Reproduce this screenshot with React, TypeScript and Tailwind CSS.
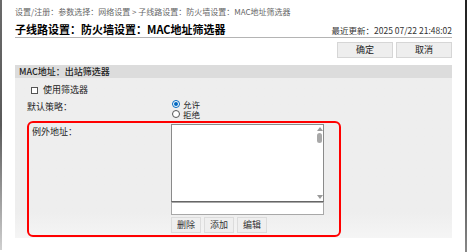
import React from 'react'

const font = { fontFamily: '"Noto Sans CJK SC", "Noto Sans", sans-serif' }

const SmallButton = ({ label }: { label: string }) => (
  <button className="h-[16px] w-[30px] border border-[#dcdcdc] bg-[#efefef] text-[9px] leading-[14px] text-[#333]">
    {label}
  </button>
)

const App = () => {
  return (
    <div style={font} className="relative h-[252px] w-[467px] overflow-hidden bg-white text-[#222]">
      {/* window edges */}
      <div className="absolute left-0 top-0 h-[250px] w-[2px] bg-gradient-to-b from-[#6a6a6a] via-[#5a5a5a] to-[#d0d0d0]" />
      <div className="absolute right-0 top-0 h-[252px] w-[2px] bg-gradient-to-b from-[#222] via-[#333] to-[#888]" />

      <div className="pl-[15px] pr-[15px]">
        {/* breadcrumb */}
        <div className="pt-[6px] text-[8px] leading-[12px] text-[#666]">
          设置/注册：参数选择：网络设置 &gt; 子线路设置：防火墙设置：MAC地址筛选器
        </div>

        {/* title */}
        <div className="mt-[4px] flex items-end justify-between border-b border-[#b4b4b4] pb-[1px]">
          <h1 className="text-[11px] font-bold leading-[14px] text-black">
            子线路设置：防火墙设置：MAC地址筛选器
          </h1>
          <span className="text-[8.5px] leading-[12px] text-[#333]">最近更新：2025 07/22 21:48:02</span>
        </div>

        {/* actions */}
        <div className="mt-[4px] flex justify-end gap-[3px]">
          <button className="h-[16px] w-[56px] border border-[#d6d6d6] bg-[#eeeeee] text-[9px] leading-[14px]">确定</button>
          <button className="h-[16px] w-[56px] border border-[#d6d6d6] bg-[#eeeeee] text-[9px] leading-[14px]">取消</button>
        </div>

        {/* section */}
        <div className="mt-[7px] bg-gradient-to-b from-[#eeeeee] from-85% to-[#f5f5f5] pb-[1px]">
          <div className="h-[13px] bg-[#dcdcdc] pl-[4px] text-[9px] font-medium leading-[13px] text-[#222]">
            MAC地址：出站筛选器
          </div>

          <div className="flex items-center pl-[16px] pt-[6px]">
            <span className="h-[7px] w-[7px] border border-[#555] bg-white" />
            <span className="ml-[5px] text-[9px] leading-[12px]">使用筛选器</span>
          </div>

          <div className="mt-[3px] flex pl-[12px]">
            <span className="w-[145px] pt-[2px] text-[9px] leading-[12px]">默认策略：</span>
            <div className="flex flex-col">
              <div className="flex h-[10px] items-center">
                <span className="flex h-[8px] w-[8px] items-center justify-center rounded-full border border-[#0067c0] bg-white">
                  <span className="h-[4px] w-[4px] rounded-full bg-[#0067c0]" />
                </span>
                <span className="ml-[3px] text-[8.5px] leading-[10px]">允许</span>
              </div>
              <div className="flex h-[10px] items-center">
                <span className="h-[8px] w-[8px] rounded-full border border-[#555] bg-white" />
                <span className="ml-[3px] text-[8.5px] leading-[10px]">拒绝</span>
              </div>
            </div>
          </div>

          {/* exception addresses */}
          <div className="ml-[12px] mt-[2px] flex h-[116px] w-[314px] rounded-[6px] border-2 border-[#ff0000]">
            <span className="w-[142px] pl-[3px] pt-[3px] text-[9px] leading-[12px]">例外地址：</span>
            <div className="flex flex-col pt-[1px]">
              <div className="flex h-[78px] w-[153px] justify-end border border-[#8a8a8a] border-b-[#666] bg-white">
                <div className="flex w-[7px] flex-col items-center justify-between py-[2px]">
                  <svg width="6" height="4" viewBox="0 0 6 4"><path d="M0 4 L3 0 L6 4 Z" fill="#9a9a9a" /></svg>
                  <div className="mb-auto mt-[2px] h-[10px] w-[5px] rounded-full bg-[#a8a8a8]" />
                  <svg width="6" height="4" viewBox="0 0 6 4"><path d="M0 0 L3 4 L6 0 Z" fill="#9a9a9a" /></svg>
                </div>
              </div>
              <div className="h-[13px] w-[153px] border border-[#a8a8a8] bg-white" />
              <div className="mt-[2px] flex gap-[3px]">
                <SmallButton label="删除" />
                <SmallButton label="添加" />
                <SmallButton label="编辑" />
              </div>
            </div>
          </div>
        </div>
      </div>
    </div>
  )
}

export default App
